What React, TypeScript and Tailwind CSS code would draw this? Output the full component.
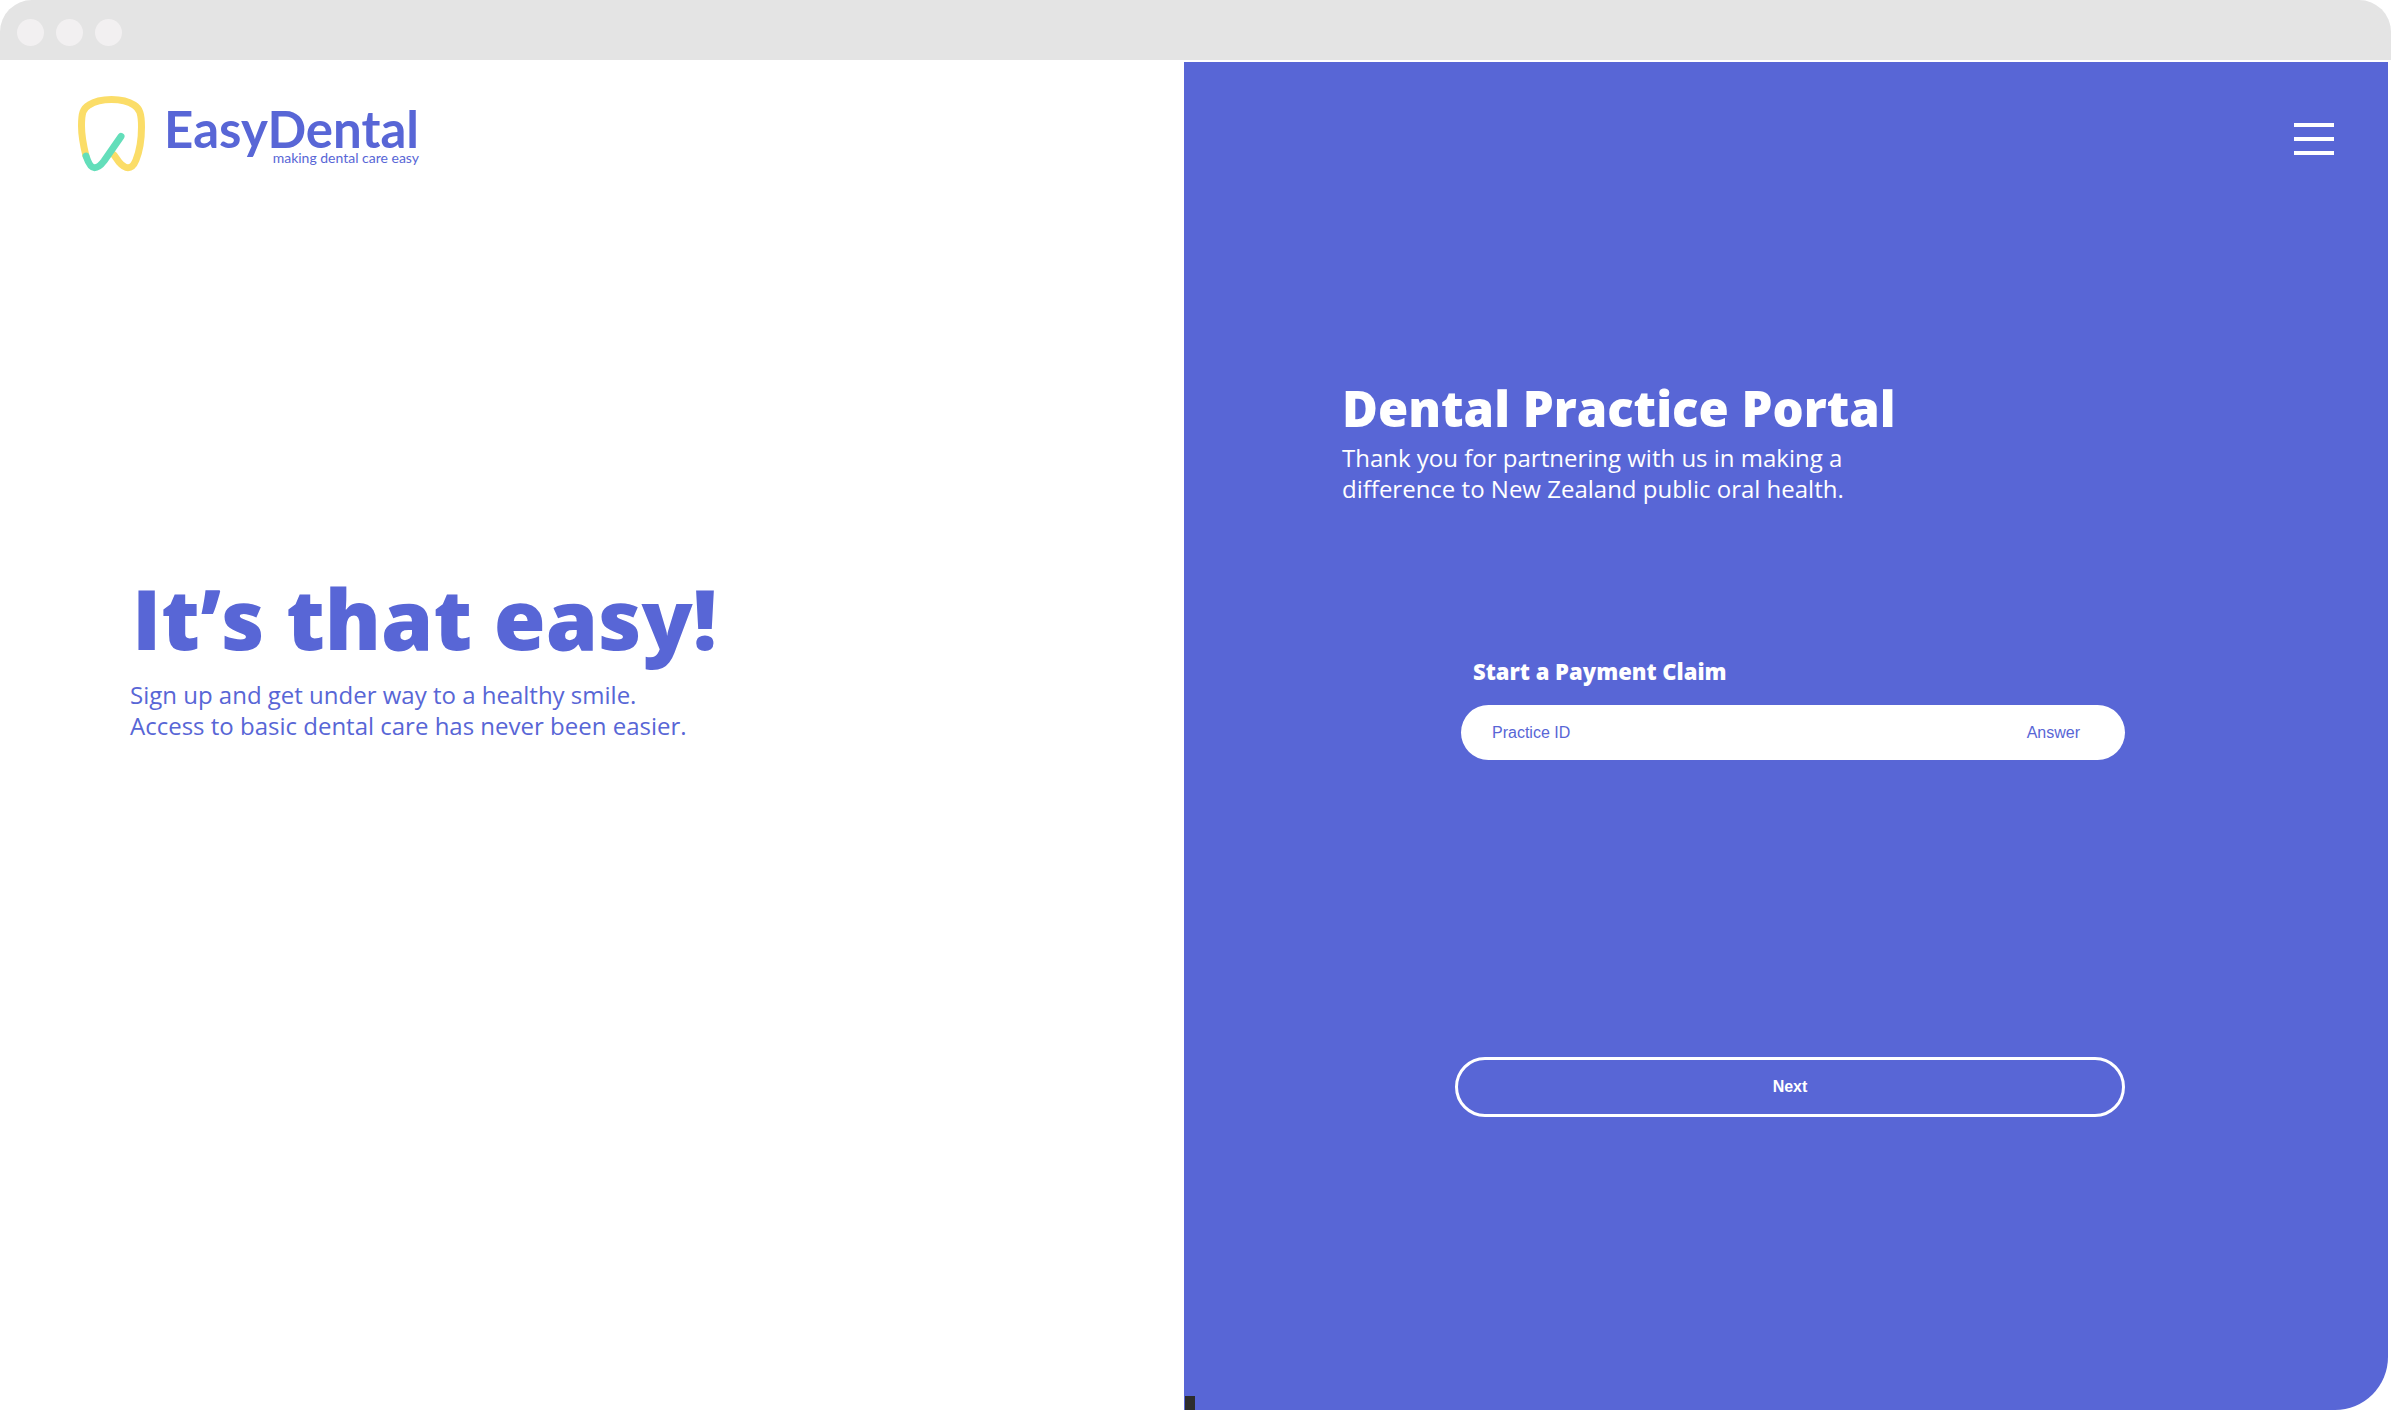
function ToothLogo() {
  return (
    <svg viewBox="0 0 68 76" fill="none" strokeWidth="7" strokeLinecap="round" strokeLinejoin="round" className="h-[76px] w-[68px]" aria-hidden="true">
      <path
        stroke="#FBDD68"
        d="M8 60 C5.500 50 3.500 41 3.500 30 C3.500 17 5 12.500 11 9 C17 5 25 3.500 33.500 3.500 C42 3.500 50 5 56 9 C61.500 12.500 63.500 17 63.500 31 C63.500 43 62 54 58 64 C56 69 53.500 71.700 50 71.700 C47 71.700 44 69.500 41 66 L36 59"
      />
      <path stroke="#63DEBA" d="M8 60 C10 66 12.500 71.700 16.500 71.700 C20 71.700 23 69 26 65 L43 40.500" />
    </svg>
  );
}

export default function App() {
  return (
    <div className="flex min-h-screen flex-col bg-white pb-[3px] font-['Open_Sans',sans-serif] text-[#5866D6]">
      <div className="flex h-[60px] shrink-0 items-center gap-3 rounded-t-[32px] bg-[#E4E4E4] pt-[5px] pl-[17px]">
        <span className="size-[27px] rounded-full bg-[#F2F0F1]" />
        <span className="size-[27px] rounded-full bg-[#F2F0F1]" />
        <span className="size-[27px] rounded-full bg-[#F2F0F1]" />
      </div>

      <div className="mt-[2px] grid grow grid-cols-[1184fr_1204fr] pr-[3px]">
        <section className="flex flex-col pt-[34px]">
          <a href="#" className="flex items-start gap-[18px] self-start pl-[78px] font-['Lato',sans-serif]">
            <ToothLogo />
            <span className="flex flex-col items-end pt-3">
              <span className="text-[51px] leading-[42px] font-bold">EasyDental</span>
              <span className="text-[14px] leading-4">making dental care easy</span>
            </span>
          </a>
          <div className="mt-[394px] pl-[130px]">
            <h1 className="pl-0.5 text-[84px] leading-[104px] font-extrabold">It’s that easy!</h1>
            <p className="mt-[9px] text-[24px] leading-[31px]">
              Sign up and get under way to a healthy smile.
              <br />
              Access to basic dental care has never been easier.
            </p>
          </div>
        </section>

        <main className="relative flex flex-col rounded-br-[53px] bg-[#5866D6] text-white">
          <button type="button" aria-label="Menu" className="mt-[61px] mr-[54px] flex flex-col gap-[10px] self-end">
            <span className="h-1 w-10 bg-white" />
            <span className="h-1 w-10 bg-white" />
            <span className="h-1 w-10 bg-white" />
          </button>

          <div className="mt-[223px] pl-[158px]">
            <h2 className="text-[49px] leading-[60px] font-extrabold">Dental Practice Portal</h2>
            <p className="mt-1 text-[24px] leading-[31px]">
              Thank you for partnering with us in making a
              <br />
              difference to New Zealand public oral health.
            </p>
          </div>

          <form className="mt-[151px] mr-[263px] ml-[271px] flex flex-col" onSubmit={(e) => e.preventDefault()}>
            <label htmlFor="practice-id" className="pl-[18px] text-[22px] leading-8 font-extrabold">
              Start a Payment Claim
            </label>
            <div className="mt-[18px] ml-[6px] flex h-[55px] items-center rounded-full bg-white pr-[45px] pl-[31px] font-['Liberation_Sans',sans-serif] text-base text-[#5866D6]">
              <input
                id="practice-id"
                type="text"
                placeholder="Practice ID"
                className="min-w-0 grow bg-transparent outline-none placeholder:text-[#5866D6] placeholder:opacity-100"
              />
              <button type="button">Answer</button>
            </div>
            <button type="submit" className="mt-[297px] h-[60px] rounded-full border-3 border-white font-['Liberation_Sans',sans-serif] text-base font-bold">
              Next
            </button>
          </form>
          <span className="absolute bottom-0 left-px h-[14px] w-[10px] bg-[#2D2D2D]" />
        </main>
      </div>
    </div>
  );
}
